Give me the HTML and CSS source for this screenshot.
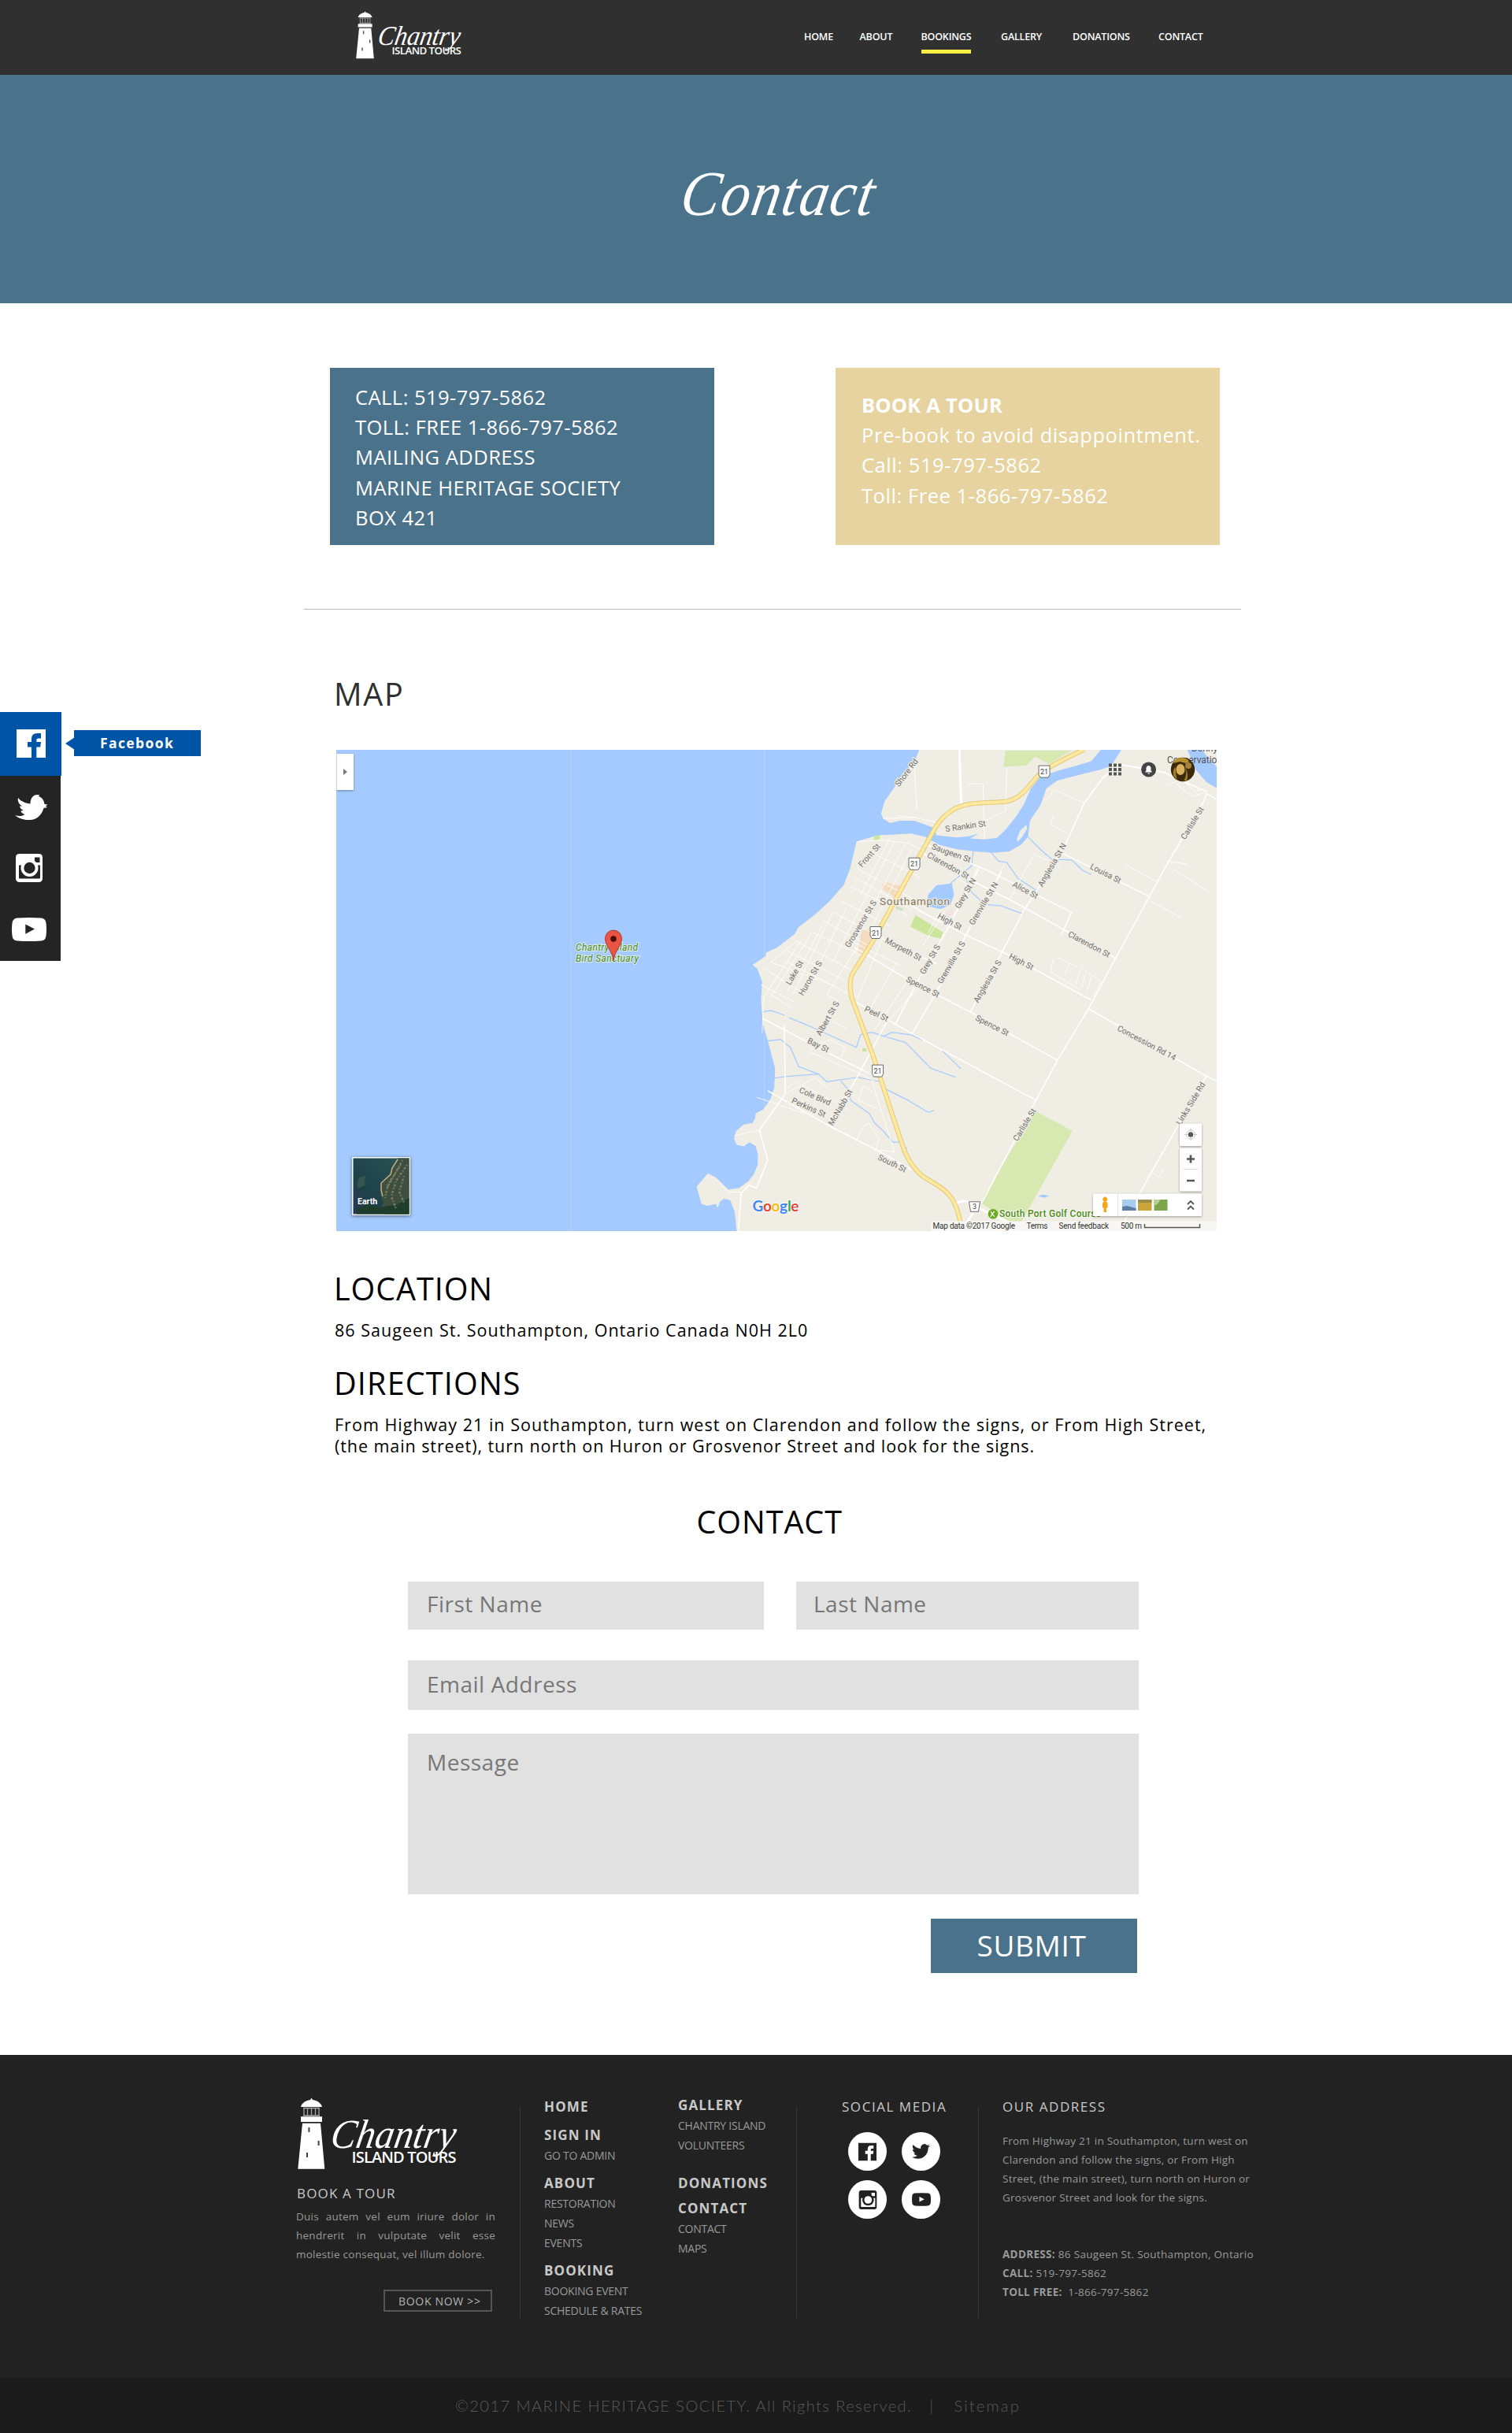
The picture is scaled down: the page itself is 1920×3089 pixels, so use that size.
FILE: index.html
```html
<!DOCTYPE html>
<html lang="en">
<head>
<meta charset="utf-8">
<title>Contact | Chantry Island Tours</title>
<link rel="stylesheet" href="styles.css">
</head>
<body>
<svg class="sprite" aria-hidden="true">
  <symbol id="logo" viewBox="0 0 206 100">
    <path fill="#fff" d="M17.500 0.500l1.500 2.500c6.500 1 11 4.500 12 9h-27c1-4.500 5.500-8 12-9zM4 24.300h27v6.700h-27zM6 32.700h23l5.300 58h-34z"/>
    <path stroke="#fff" stroke-width="1.300" opacity=".6" d="M8 13v10.500M12.500 13v10.500M17.500 13v10.500M22.500 13v10.500M27 13v10.500M7 13.500h21M7 23h21"/>
    <path stroke="#444" stroke-width="2" d="M14.400 38v6M26.600 55v6M12 70v6"/>
    <text class="logo-script" transform="translate(40 64.300) skewX(-10) scale(.92 1)">Chantry</text>
    <text class="logo-sub" x="68.500" y="82.800">ISLAND TOURS</text>
  </symbol>
  <symbol id="facebook" viewBox="0 0 37 36"><path fill="currentColor" fill-rule="evenodd" d="M0 0H37V36H25.300V22.500H30.200L31 16H25.300V13.500Q25.300 11.500 27.500 11.500H31V5H26Q19 5 19 12V16H14V22.500H19V36H0Z"/></symbol>
  <symbol id="bird" viewBox="0 0 42 32"><path fill="currentColor" d="M0 26C5 28 10 27 12.500 25C9 24 7.500 22 7.500 20.500L11 20C7.500 18.500 6 16 6 14.500L9 14.500C5 12 3 8 4 4C8 9 14 11 19.500 11.500C19.500 4 24 0 28 0L31 0L30 2C34 3 37 7 37.500 12L41.500 12.500L39 14.500L41 16L36.500 17C34 26 27 32 19 32L14 32C8 31 3 29 0 26Z"/></symbol>
  <symbol id="twitter" viewBox="0 0 24 24"><path fill="currentColor" d="M23.953 4.570a10 10 0 01-2.825.775 4.958 4.958 0 002.163-2.723c-.951.555-2.005.959-3.127 1.184a4.920 4.920 0 00-8.384 4.482C7.690 8.095 4.067 6.130 1.640 3.162a4.822 4.822 0 00-.666 2.475c0 1.710.870 3.213 2.188 4.096a4.904 4.904 0 01-2.228-.616v.060a4.923 4.923 0 003.946 4.827 4.996 4.996 0 01-2.212.085 4.936 4.936 0 004.604 3.417 9.867 9.867 0 01-6.102 2.105c-.390 0-.779-.023-1.170-.067a13.995 13.995 0 007.557 2.209c9.053 0 13.998-7.496 13.998-13.985 0-.210 0-.420-.015-.630A9.935 9.935 0 0024 4.590z"/></symbol>
  <symbol id="instagram" viewBox="0 0 34 36"><rect width="34" height="36" rx="4.500" fill="currentColor"/><path class="cut" d="M24 4.500h6.500v6.500h-6.500zM4 14.500h27v16q0 1-1 1h-25q-1 0-1-1z"/><circle cx="17.500" cy="18" r="11" fill="currentColor"/><circle class="cut" cx="17.500" cy="18" r="7.200"/></symbol>
  <symbol id="youtube" viewBox="0 0 44 30"><path fill="currentColor" fill-rule="evenodd" d="M7 .5Q22-.5 37 .5Q43 1 43.500 7Q44.500 15 43.500 23Q43 29 37 29.500Q22 30.500 7 29.500Q1 29 .5 23Q-.5 15 .5 7Q1 1 7 .5ZM17.300 8.500V20.700L29 14.600Z"/></symbol>
</svg>

<header class="header">
  <a class="logo"><svg width="137" height="66.500"><use href="#logo"/></svg></a>
  <nav class="nav"><a>HOME</a><a>ABOUT</a><a class="active">BOOKINGS</a><a>GALLERY</a><a>DONATIONS</a><a>CONTACT</a></nav>
</header>

<section class="hero"><h1>Contact</h1></section>

<aside class="share">
  <a class="share-fb"><svg width="37" height="36"><use href="#facebook"/></svg></a>
  <a class="share-tw"><svg width="42" height="32"><use href="#bird"/></svg></a>
  <a class="share-ig"><svg width="34" height="36"><use href="#instagram"/></svg></a>
  <a class="share-yt"><svg width="44" height="30"><use href="#youtube"/></svg></a>
  <span class="share-tip">Facebook</span>
</aside>

<main>
  <div class="cards">
    <div class="card card-blue">CALL: 519-797-5862<br>TOLL: FREE 1-866-797-5862<br>MAILING ADDRESS<br>MARINE HERITAGE SOCIETY<br>BOX 421</div>
    <div class="card card-gold"><b>BOOK A TOUR</b><br>Pre-book to avoid disappointment.<br>Call: 519-797-5862<br>Toll: Free 1-866-797-5862</div>
  </div>
  <hr class="rule">

  <section class="info">
    <h2 class="map-title">MAP</h2>
    <svg class="map" width="1118" height="611" viewBox="0 0 1118 611">
      <rect width="1118" height="611" fill="#a4caff"/>
      <path stroke="#b4d3fd" d="M297.500 0V611M543.500 0V470"/>
      <g class="geo" transform="matrix(.35714 0 0 .40816 573 -12)">
        <path fill="#f0ede5" d="M470 25L455 60 400 115 385 140 345 190 333 228 300 280 245 315 240 335 222 400 200 450 150 500 100 540 38 582 26 602-38 645-76 660-78 672-124 698-108 710-90 750-94 810-88 880-70 935-44 1020-47 1080-60 1115-86 1148-113 1160-115 1175-124 1190-156 1195-183 1215-190 1240-180 1258-156 1263-135 1250-113 1262-105 1290-106 1320-120 1350-140 1372-172 1392-210 1397-242 1370-255 1360-283 1347-323 1388-306 1442-285 1448-255 1442-249 1455-240 1435-226 1425-204 1430-188 1465-180 1530 1540 1530 1540 20Z"/>
        <path fill="#d7e8b1" d="M775 32H1010L930 74 880 50 850 78 768 82ZM880 1152L1013 1215 830 1500H790L690 1440 700 1415Z"/>
        <path fill="#cbe59b" d="M455 543L553 597 545 617 520 612 490 603 437 580ZM308 298l18-6 4 12-12 8-12-4ZM266 958h14v10h-14z"/>
        <path fill="#f3dcc0" d="M338 440L415 455 400 480 380 488 335 462ZM265 590L300 585 290 640 268 668 248 662Z"/>
        <path fill="#d1e3c2" d="M385 515l28 8-10 10-20-5z"/><path fill="#f3e3e8" d="M560 535l30-12 0 16-20 16z"/>
        <path fill="#a4caff" d="M200 250L333 228 340 243 365 257 400 250 450 250 490 262 520 272 530 295 600 302 645 298 680 290 650 305 700 308 745 303 775 278 810 240 840 200 865 150 900 112 960 95 1020 80 1080 65 1118 25H1190L1150 80 1110 92 1060 102 960 125 920 150 900 200 862 250 855 300 830 325 790 345 730 350 660 345 600 338 540 325 490 300 440 290 380 293 320 295 245 315 200 330ZM1420 25L1450 90 1490 130 1530 150V85L1500 60 1470 25ZM500 480L530 450 585 445 592 480 580 510 545 525 495 515ZM890 1417l20-4 22 4-20 6z"/>
        <path fill="#f0ede5" d="M815 308L828 280 850 262 852 275 835 300 818 315Z"/>
        <path class="stream" d="M5 862L90 893 245 955 260 915 300 908 360 925 420 940 470 985 510 1020 598 1048M-130 1060L0 1045 110 1038 140 1062 250 1048 330 1062 350 1085 430 1120 500 1157 520 1152M190 1060L215 1085 225 1120 290 1160 310 1190 340 1215 375 1250 400 1250 425 1270M340 922L370 908 440 916 480 932M550 965L617 1022M855 300L900 340 940 370 1010 372 1050 405 1080 417M725 350L750 375 780 380 820 430 885 467M660 345L655 390 600 430 560 460M638 430L640 460 700 510 760 515 838 540M-88 845L-60 840-10 855M-70 935L-25 930 10 955 40 1015 110 1038"/>
        <path class="street thin" d="M250 315L340 310 430 320 490 345M290 345L470 425M250 400L470 505M235 425L440 525M225 455L430 545M190 500L370 580M165 535L345 620M240 630L400 700M125 560L300 645M85 595L270 670M30 625L240 720M0 655L200 745M0 690L220 790M-60 690L110 745M-80 710L60 790M-95 760L30 815M-60 790L10 830M380 315L160 690M420 320L230 640M360 310L260 480M440 340L300 580M320 320L290 375M210 520L100 720M160 535L20 790M125 575L0 780M85 600L-60 800M50 620L-85 800M30 625L-60 690M-85 800L-90 910M250 640L140 790 180 810 170 840M340 610L245 810M390 690L290 840M430 745L310 900M470 765L350 880M560 530L480 640M545 525L500 600M600 430L650 450M680 390L640 460M770 385L740 440M880 350L790 495M880 355L970 390M1200 385L1310 438M1370 400L1495 470M1290 500L1400 552M1350 375L1420 385M945 235L935 260 995 290M1055 195L950 155 920 185M450 60L460 215M340 243L450 240 530 255M640 135L695 135 700 305M690 255L775 220 780 90M390 235L460 240M1350 140L1400 120 1450 160 1480 150M1380 135L1440 175 1490 160M1320 95L1300 110M150 760L110 740M160 875L210 895M80 965L150 930 205 955 190 985M80 970L240 1030 310 1060M250 1120L270 1075 300 1090M0 1095L100 1050 150 1085M250 1120L320 1145M240 1250L270 1200 290 1190 325 1240 310 1280M300 1060L380 1280 330 1275M-110 1110L60 1160M0 1080L30 1062 220 1150M-240 1380L-210 1405-165 1405M-190 1230L-100 1212M960 675L1030 705M945 680L935 720 1040 775M1040 705L1115 750 1090 790M1000 700L985 730M1040 715L1025 760M1060 725L1045 770M1080 735L1065 780M1290 1340L1320 1360 1340 1330"/>
        <path class="street" d="M1320 95L1180 75 1120 118 1055 195 980 340 840 530 765 655 650 845M1530 185L1490 165 1480 190 1340 400 1165 680 1070 835 960 995 880 1125 690 1440M1490 160L1340 100 1180 75M975 350L1290 487M480 320L700 400 1010 535 975 602M470 345L640 430 790 495 1170 680M400 490L470 530 620 600 780 665 1080 808M1070 835L1480 1040 1530 1062M345 620L530 695M240 645L430 745 650 845 960 995M245 815L480 930 885 1120M1488 1045L1400 1180 1290 1350 1190 1510M-70 1090L150 1200 330 1280 440 1335M760 410L650 580 545 760 445 910M680 400L560 600 480 720 385 880M350 880L265 1020 150 1200M-88 865L140 970 290 1035M-11 885L-8 1100-100 1212-70 1305-110 1393-138 1383-165 1410-175 1530"/>
        <path class="street wide" d="M612 25V60L618 205M600 1440Q640 1420 680 1455M660 1470L620 1520M680 1455L790 1500"/>
        <path class="hwy-edge" d="M1055 28C980 60 930 80 890 110C850 150 830 180 780 190C700 196 640 190 590 215C555 235 540 250 520 280L400 470 300 630 235 720Q215 745 228 800L300 970 405 1250Q430 1320 480 1355C520 1380 555 1390 575 1415Q610 1450 620 1530"/>
        <path class="hwy" d="M1055 28C980 60 930 80 890 110C850 150 830 180 780 190C700 196 640 190 590 215C555 235 540 250 520 280L400 470 300 630 235 720Q215 745 228 800L300 970 405 1250Q430 1320 480 1355C520 1380 555 1390 575 1415Q610 1450 620 1530"/>
      </g>
      <g class="lbl">
        <text transform="translate(724 29) rotate(-53)">Shore Rd</text>
        <text transform="translate(799 97) rotate(-8)">S Rankin St</text>
        <text transform="translate(677 134) rotate(-48)">Front St</text>
        <text transform="translate(781 131) rotate(20)">Saugeen St</text>
        <text transform="translate(777 147) rotate(29)">Clarendon St</text>
        <text transform="translate(977 157) rotate(27)">Louisa St</text>
        <text transform="translate(909 146) rotate(-60)">Anglesia St N</text>
        <text transform="translate(1087 93) rotate(-59)">Carlisle St</text>
        <text transform="translate(875 178) rotate(28)">Alice St</text>
        <text transform="translate(799 182) rotate(-60)">Grey St N</text>
        <text transform="translate(822 195) rotate(-59)">Grenville St N</text>
        <text transform="translate(666 221) rotate(-59)">Grosvenor St S</text>
        <text transform="translate(779 218) rotate(28)">High St</text>
        <text transform="translate(720 253) rotate(28)">Morpeth St</text>
        <text transform="translate(956 247) rotate(28)">Clarendon St</text>
        <text transform="translate(870 269) rotate(27)">High St</text>
        <text transform="translate(754 266) rotate(-60)">Grey St S</text>
        <text transform="translate(781 270) rotate(-60)">Grenville St S</text>
        <text transform="translate(827 294) rotate(-60)">Anglesia St S</text>
        <text transform="translate(745 301) rotate(27)">Spence St</text>
        <text transform="translate(833 350) rotate(27)">Spence St</text>
        <text transform="translate(582 283) rotate(-60)">Lake St</text>
        <text transform="translate(602 290) rotate(-60)">Huron St S</text>
        <text transform="translate(624 341) rotate(-60)">Albert St S</text>
        <text transform="translate(686 335) rotate(25)">Peel St</text>
        <text transform="translate(612 375) rotate(26)">Bay St</text>
        <text transform="translate(608 440) rotate(24)">Cole Blvd</text>
        <text transform="translate(600 454) rotate(24)">Perkins St</text>
        <text transform="translate(640 454) rotate(-60)">McNabb St</text>
        <text transform="translate(706 525) rotate(26)">South St</text>
        <text transform="translate(1029 372) rotate(28)">Concession Rd 14</text>
        <text transform="translate(874 476) rotate(-59)">Carlisle St</text>
        <text transform="translate(1085 449) rotate(-59)">Links Side Rd</text>
      </g>
      <text class="town" x="690" y="197" textLength="89">Southampton</text>
      <g class="shield">
        <g transform="translate(899 27.600)"><path d="M-7-7.500H7V4L5 7.500H-5L-7 4Z"/><text y="3.500">21</text></g>
        <g transform="translate(734 144.700)"><path d="M-7-7.500H7V4L5 7.500H-5L-7 4Z"/><text y="3.500">21</text></g>
        <g transform="translate(685 232)"><path d="M-7-7.500H7V4L5 7.500H-5L-7 4Z"/><text y="3.500">21</text></g>
        <g transform="translate(687.600 407.600)"><path d="M-7-7.500H7V4L5 7.500H-5L-7 4Z"/><text y="3.500">21</text></g>
        <g transform="translate(810.500 579.800)"><path d="M-7-6H7L5 6.500H-5Z"/><text y="3.500">3</text></g>
      </g>
      <text class="isle" x="304" y="255" textLength="79">Chantry Island</text>
      <text class="isle" x="304" y="269" textLength="80">Bird Sanctuary</text>
      <path fill="#ea5444" stroke="#b5352a" d="M352 267.500C351 256 341.500 249 341.500 239.500a10.500 10.500 0 0 1 21 0C362.500 249 353 256 352 267.500Z"/>
      <circle cx="352" cy="240" r="3.800" fill="#4d0d0a"/>
      <text class="google" x="528.500" y="585.500" textLength="59"><tspan fill="#4285f4">G</tspan><tspan fill="#ea4335">o</tspan><tspan fill="#fbbc05">o</tspan><tspan fill="#4285f4">g</tspan><tspan fill="#34a853">l</tspan><tspan fill="#ea4335">e</tspan></text>
      <g class="panel"><path d="M0.500 5H22V51H0.500Z"/></g><path fill="#777" d="M9 24l5 4-5 4z"/>

      <linearGradient id="sea" x1="0" y1="1" x2="1" y2="0"><stop offset="0" stop-color="#2a3656"/><stop offset=".35" stop-color="#1d4248"/><stop offset="1" stop-color="#2b5556"/></linearGradient>
      <g transform="translate(20 517)">
        <rect class="thumb" x="0" y="0" width="74" height="74" rx="1"/>
        <rect x="1.500" y="1.500" width="71" height="71" fill="url(#sea)"/>
        <path fill="#3d4f3f" d="M72.500 1.500H59L50 14 48 23 36 34 36 48 40 58 36 66 40 72.500H72.500Z"/>
        <path fill="#1f3d2c" d="M36 64L20 60 6 66V72.500H72.500V52L58 60Z"/>
        <path fill="none" stroke="#c4ac87" stroke-width="1.500" d="M58 3L51 14 49 22 37 33 37 42 39 50"/>
        <path fill="none" stroke="#77785f" stroke-dasharray="1.500 2.300 3 1.700" stroke-width="2.500" d="M64 4L52 26 44 40M70 10L56 30 50 50 56 66M66 24L60 44 66 58M62 10L46 34 42 52"/>
        <path fill="#35564f" d="M9 26l8-2-1 12-8 4-2-5z"/>
        <text class="earth" x="7" y="60">Earth</text>
      </g>

      <text class="reserve" x="1086" y="2">Denny's</text><text class="reserve" x="1055" y="16.500" textLength="70">Conservation</text>
      <path fill="#555" d="M981 17.500h4v4h-4zM987 17.500h4v4h-4zM993 17.500h4v4h-4zM981 23h4v4h-4zM987 23h4v4h-4zM993 23h4v4h-4zM981 28.500h4v4h-4zM987 28.500h4v4h-4zM993 28.500h4v4h-4z"/>
      <circle cx="1031.600" cy="25" r="9.500" fill="#444"/><path fill="#fff" d="M1027.500 28.500v-1l1-1v-3q0-3 3-3.500q3 .5 3 3.500v3l1 1v1zM1030.500 29.500h2.500v1h-2.500z"/>
      <circle cx="1075" cy="25" r="15.200" fill="#3b2b0a"/><path fill="#b98f2b" d="M1063 17q2-7 10-7t10 5l-4 2-8-2z"/><ellipse cx="1072" cy="25" rx="5.500" ry="7" fill="#d9b060"/><path fill="#a67c22" d="M1066 22q0 12 2 16l-5-5q-1-9 3-11zM1078 22q3 12-2 17h4q3-8-2-17z"/><circle cx="1082" cy="20" r="4" fill="#a9803a"/>

      <g class="panel"><rect x="1071" y="474.500" width="28" height="28.500" rx="1"/><rect x="1071" y="505.500" width="28" height="55" rx="1"/></g>
      <circle cx="1085" cy="488.500" r="5.500" fill="none" stroke="#c8c8c8"/><path stroke="#c8c8c8" d="M1085 480.500v4M1085 492.500v4M1077 488.500h4M1089 488.500h4"/><circle cx="1085" cy="488.500" r="3.200" fill="#555"/>
      <path stroke="#555" stroke-width="2.600" d="M1080 519.500h10M1085 514.500v10M1080 547h10"/><path stroke="#ddd" d="M1076 532.500h18"/>

      <circle cx="834" cy="589.300" r="6.300" fill="#6aab1f"/><path stroke="#fff" fill="none" stroke-width="1.200" d="M831 586l2 3 3-3M833 589l3 4M833 589l-2 4"/>
      <text class="golf" x="842" y="593" textLength="129">South Port Golf Course</text>
      <rect x="755" y="598.500" width="363" height="12.500" fill="#f8f7f3"/>
      <g class="panel"><rect x="961" y="563.500" width="138" height="28.500" rx="1"/></g><path stroke="#e5e5e5" d="M992.500 564v28"/>
      <path fill="#f0a81e" d="M973 581v-5q0-2 2.500-2.500a3 3 0 1 1 1.500 0q2.500 .5 2.500 2.500v5l-1.500 1v5h-3.500v-5z"/>
      <path fill="#a9cdf0" d="M998 571h17.500v14H998z"/><path fill="#5c7ea4" d="M998 580l6-1 11.500 3v3H998z"/><path fill="#c9a438" d="M1018 571h17.500v14H1018z"/><path fill="#9b8f50" d="M1018 571h17.500v4H1018z"/><path fill="#7da64a" d="M1038.500 571h17v14h-17z"/><path fill="#b9cf9a" d="M1038.500 571h8l-3 5-5 3z"/>
      <path fill="none" stroke="#555" stroke-width="1.800" d="M1081 577l4-4 4 4M1081 583.500l4-4 4 4"/>
      <g class="attr"><text x="757.500" y="607.500" textLength="104.500">Map data ©2017 Google</text><text x="876.500" y="607.500" textLength="27">Terms</text><text x="917.500" y="607.500" textLength="63.500">Send feedback</text><text x="996" y="607.500" textLength="27">500 m</text></g>
      <path fill="none" stroke="#555" stroke-width="1.500" d="M1026.500 602v4.500h70V602"/>
    </svg>

    <h2 class="loc-title">LOCATION</h2>
    <p>86 Saugeen St. Southampton, Ontario Canada N0H 2L0</p>
    <h2 class="dir-title">DIRECTIONS</h2>
    <p>From Highway 21 in Southampton, turn west on Clarendon and follow the signs, or From High Street,<br><span class="second">(the main street), turn north on Huron or Grosvenor Street and look for the signs.</span></p>
  </section>

  <section class="contact">
    <h2>CONTACT</h2>
    <form class="form">
      <input class="first" placeholder="First Name">
      <input class="last" placeholder="Last Name">
      <input class="email" placeholder="Email Address">
      <textarea class="message" placeholder="Message"></textarea>
      <button class="submit" type="button">SUBMIT</button>
    </form>
  </section>
</main>

<footer class="footer">
  <div class="brand">
    <svg class="brand-logo" width="206" height="100"><use href="#logo"/></svg>
    <h3>BOOK A TOUR</h3>
    <p><span>Duis autem vel eum iriure dolor in</span> <span>hendrerit in vulputate velit esse</span> <span>molestie consequat, vel illum dolore.</span></p>
    <a class="book">BOOK NOW &gt;&gt;</a>
  </div>
  <div class="divider"></div>
  <div class="links links-a">
    <h4>HOME</h4>
    <h4>SIGN IN</h4><a>GO TO ADMIN</a>
    <h4>ABOUT</h4><a>RESTORATION</a><a>NEWS</a><a>EVENTS</a>
    <h4>BOOKING</h4><a>BOOKING EVENT</a><a>SCHEDULE &amp; RATES</a>
  </div>
  <div class="links links-b">
    <h4>GALLERY</h4><a>CHANTRY ISLAND</a><a>VOLUNTEERS</a>
    <h4 class="donate">DONATIONS</h4>
    <h4>CONTACT</h4><a>CONTACT</a><a>MAPS</a>
  </div>
  <div class="divider"></div>
  <div class="social">
    <h3>SOCIAL MEDIA</h3>
    <div class="circles">
      <a><svg width="23" height="24"><use href="#facebook"/></svg></a>
      <a><svg width="23" height="23"><use href="#twitter"/></svg></a>
      <a><svg width="24" height="24"><use href="#instagram"/></svg></a>
      <a><svg width="24" height="17"><use href="#youtube"/></svg></a>
    </div>
  </div>
  <div class="divider"></div>
  <div class="address">
    <h3>OUR ADDRESS</h3>
    <p>From Highway 21 in Southampton, turn west on<br>Clarendon and follow the signs, or From High<br>Street, (the main street), turn north on Huron or<br>Grosvenor Street and look for the signs.</p>
    <p class="lines"><b>ADDRESS:</b> 86 Saugeen St. Southampton, Ontario<br><b>CALL:</b> 519-797-5862<br><b>TOLL FREE:</b>&nbsp; 1-866-797-5862</p>
  </div>
</footer>
<div class="copyright"><span>©2017 MARINE HERITAGE SOCIETY. All Rights Reserved.</span><span class="bar">|</span><a>Sitemap</a></div>
</body>
</html>
```
FILE: styles.css
```css
* { box-sizing: border-box; }
body { margin: 0; position: relative; width: 1920px; background: #fff; color: #000; font-family: "Open Sans", sans-serif; }
h1, h2, h3, h4, p { margin: 0; font-weight: 400; }
svg { display: block; }
.sprite { position: absolute; width: 0; height: 0; }
.cut { fill: var(--cut); }

.logo-script { font: italic 400 52px "Liberation Serif", serif; fill: #fff; }
.logo-sub { font: 600 20px "Open Sans", sans-serif; letter-spacing: -.043em; fill: #fff; }

/* header */
.header { height: 95px; background: #303030; display: flex; }
.logo { margin: 14px 0 0 452px; width: 137px; }
.nav { margin: 37px 0 0 432px; display: grid; grid-template-columns: 70.500px 78px 101.500px 91px 109px auto; justify-items: start; align-items: start; font-size: 12.500px; font-weight: 600; line-height: 20px; letter-spacing: -.015em; color: #fff; }
.nav a { padding-bottom: 6px; }
.nav .active { border-bottom: 5px solid #fbee44; }

.hero { height: 290px; background: #4b728b; padding: 101px 0 0 861px; }
.hero h1 { width: 270px; font: italic 400 81px/100px "Liberation Serif", serif; color: #fff; letter-spacing: .025em; transform: skewX(-10deg) scaleX(.91); transform-origin: 0 78px; white-space: nowrap; }

/* share bar */
.share { position: absolute; left: 0; top: 904px; width: 77px; height: 316px; background: #242424; color: #fff; --cut: #242424; display: flex; flex-direction: column; }
.share-fb { width: 78px; height: 81px; background: #0054a6; padding: 22px 0 0 21px; }
.share-tw { margin: 24px 0 0 19px; }
.share-ig { margin: 43px 0 0 20px; }
.share-yt { margin: 45px 0 0 15px; }
.share-tip { position: absolute; left: 94px; top: 23px; width: 161px; height: 33px; background: #0054a6; font-weight: 700; font-size: 17.500px; line-height: 32px; letter-spacing: .08em; padding-left: 33px; }
.share-tip::before { content: ""; position: absolute; left: -11px; top: 9px; border: solid transparent; border-width: 8px 12px 8px 0; border-right-color: #0054a6; }

/* info cards */
.cards { display: flex; gap: 154px; margin: 82px 0 0 419px; }
.card { width: 488px; height: 225px; color: #fff; font-size: 25.500px; line-height: 38.200px; white-space: nowrap; }
.card-blue { background: #4b728b; padding: 18px 0 0 32px; letter-spacing: .018em; }
.card-gold { background: #e6d3a0; padding: 28px 0 0 33px; letter-spacing: .022em; }
.card-gold b { letter-spacing: .0085em; }
.rule { width: 1190px; height: 1px; border: 0; background: #b9b9b9; margin: 81px 0 0 386px; }

h2 { font-size: 39.500px; line-height: 40px; letter-spacing: .024em; }
.info { margin-left: 424px; white-space: nowrap; }
.info p { margin: 19px 0 0 1px; font-size: 21.500px; line-height: 27px; letter-spacing: .0475em; }
.info .second { letter-spacing: .043em; }
.info .map-title { padding-top: 87px; color: #303030; letter-spacing: .044em; }
.map { margin: 51px 0 0 3px; }
.loc-title { margin-top: 53px; }
.info .dir-title { margin-top: 34px; letter-spacing: .03em; }

/* map */
.geo path { vector-effect: non-scaling-stroke; }
.street, .stream, .hwy, .hwy-edge { fill: none; stroke: #fff; stroke-width: 1.600px; stroke-linejoin: round; }
.thin { stroke-width: 1px; opacity: .85; }
.wide { stroke-width: 3px; }
.stream { stroke: #a4caff; stroke-width: 1.200px; }
.hwy-edge { stroke: #e3c77b; stroke-width: 6px; }
.hwy { stroke: #ffe99f; stroke-width: 4px; }
.map text { font-family: Roboto, sans-serif; letter-spacing: 0; }
.lbl text { font-size: 10.300px; fill: #707070; text-anchor: middle; dominant-baseline: central; paint-order: stroke; stroke: #f0ede5; stroke-width: 2.500px; }
.town { font-size: 13.500px; fill: #84795c; paint-order: stroke; stroke: #f0ede5; stroke-width: 2px; }
.shield path { fill: #fff; stroke: #6b6b6b; }
.shield text { font-size: 9px; text-anchor: middle; fill: #444; }
.isle { font-size: 12px; font-style: italic; fill: #4b8a1d; paint-order: stroke; stroke: #dcebe8; stroke-width: 2px; }
.map .google { font-family: Lato, sans-serif; font-weight: 700; font-size: 19px; paint-order: stroke; stroke: #fff; stroke-width: 1.500px; }
.panel { fill: #fff; filter: drop-shadow(0 1px 1.500px rgba(0,0,0,.35)); }
.thumb { fill: #fff; filter: drop-shadow(0 1px 2px rgba(0,0,0,.5)); }
.earth { font-size: 10.500px; font-weight: 700; fill: #fff; }
.reserve { font-size: 12px; fill: #555; }
.golf { font-size: 12px; font-weight: 500; fill: #4b8a1d; paint-order: stroke; stroke: #f5f8ec; stroke-width: 2px; }
.attr { font-size: 10px; fill: #333; }

/* contact form */
.contact h2 { margin: 63px 0 56px 884.500px; }
.form { margin-left: 518px; width: 928px; display: grid; grid-template-columns: 452px 435px; justify-content: space-between; }
.form input, .form textarea { display: block; border: 0; border-radius: 0; background: #e1e1e1; font: 400 28px/38px "Open Sans", sans-serif; letter-spacing: .018em; padding: 0 0 6px 24px; resize: none; }
.form ::placeholder { color: #777; opacity: 1; }
.form .first, .form .last { height: 61px; }
.form .last { padding-left: 22px; }
.form .email { grid-column: 1 / 3; height: 63px; margin-top: 39px; padding-bottom: 4px; }
.form .message { grid-column: 1 / 3; height: 204px; margin-top: 30px; padding-top: 17px; }
.submit { grid-column: 1 / 3; justify-self: end; margin: 31px 2px 0 0; width: 262px; height: 69px; border: 0; background: #4b728b; color: #fff; font: 400 37px "Open Sans", sans-serif; letter-spacing: .017em; padding: 0 6px 2px 0; }

/* footer */
.footer { margin-top: 104px; height: 410px; background: #222; padding: 54px 0 0 376px; display: flex; color: #999; font-size: 13.500px; line-height: 24px; letter-spacing: .0185em; white-space: nowrap; }
.footer h3 { font-size: 17px; line-height: 20px; letter-spacing: .091em; color: #c8c8c8; }
.footer h4 { font-size: 17px; line-height: 20px; letter-spacing: .066em; color: #c8c8c8; font-weight: 700; }
.brand { width: 253px; }
.brand-logo { margin-left: 2px; }
.footer .brand h3 { margin: 12px 0 7px 1px; letter-spacing: .068em; }
.brand p span { display: block; white-space: normal; text-align: justify; text-align-last: justify; }
.brand p span:last-child { text-align-last: left; }
.book { display: block; margin: 33px 0 0 111px; width: 138px; height: 28px; border: 2px solid #555; color: #b5b5b5; font-size: 14px; line-height: 25px; letter-spacing: .05em; padding-left: 17px; }
.divider { width: 1px; height: 268px; margin-top: 12px; background: #383838; }
.brand + .divider { margin-left: 31px; }
.links { display: flex; flex-direction: column; font-size: 14px; line-height: 25px; letter-spacing: -.018em; }
.links h4 { margin: 13px 0 3px; }
.links-a { padding-left: 30px; width: 199px; }
.links-a h4:first-child { margin: 2px 0; }
.links-a h4:nth-child(2) { margin-top: 14px; }
.links-b { width: 151px; padding-left: 1px; }
.links-b h4:first-child { margin-top: 0; }
.links-b .donate { margin: 26px 0 0; }
.links-b .donate + h4 { margin-top: 12px; }
.social { width: 230px; padding: 2px 0 0 57px; }
.circles { display: grid; grid-template-columns: 49px 49px; gap: 12px 19px; margin: 22px 0 0 8px; }
.circles a { width: 49px; height: 49px; border-radius: 50%; background: #fff; color: #222; --cut: #fff; display: flex; align-items: center; justify-content: center; }
.address { padding: 2px 0 0 30px; }
.address p { margin-top: 21px; }
.address .lines { margin-top: 48px; letter-spacing: .023em; }
.copyright { height: 70px; background: #1b1b1b; padding-left: 578px; display: flex; font: 300 20px/70px Lato, sans-serif; letter-spacing: .073em; color: #5a5a5a; white-space: nowrap; }
.copyright .bar { margin: 0 25px 0 22px; }
.copyright a { letter-spacing: .11em; }
```
